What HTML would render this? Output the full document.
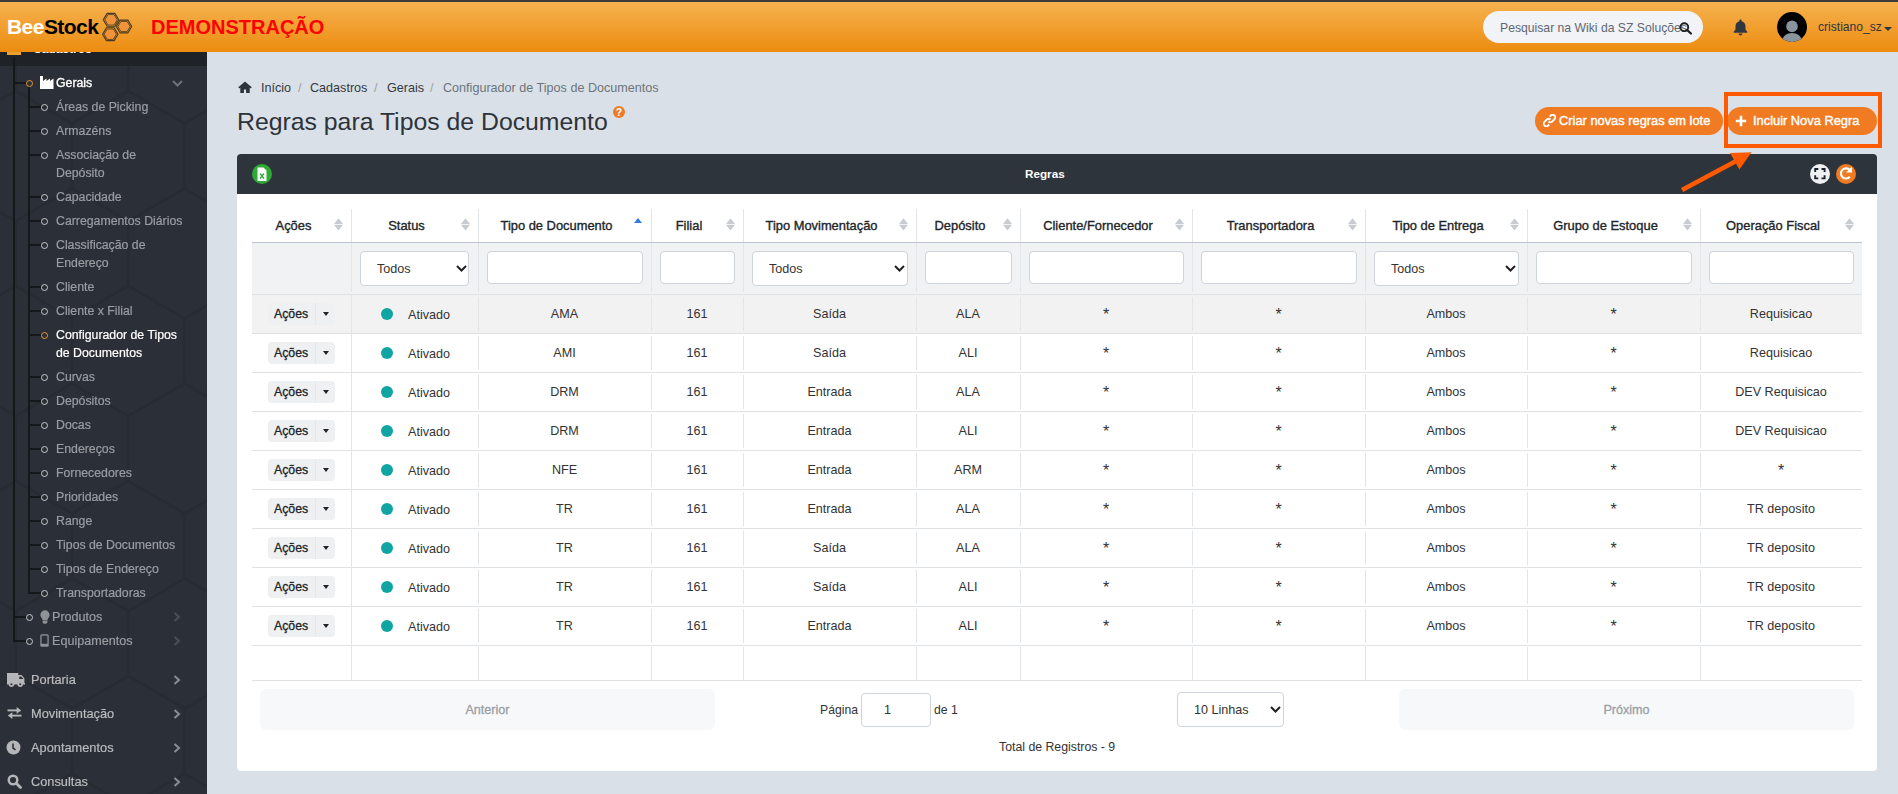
<!DOCTYPE html>
<html><head><meta charset="utf-8">
<style>
*{box-sizing:border-box;margin:0;padding:0}
html,body{width:1898px;height:794px;overflow:hidden;background:#dae0e7;font-family:"Liberation Sans",sans-serif;position:relative}
.abs{position:absolute}
.t{position:absolute;white-space:nowrap;line-height:1}
#hdr{position:absolute;left:0;top:0;width:1898px;height:52px;background:linear-gradient(#f6b24f,#ec8c10);border-top:2px solid #3b3b3b}
#side{position:absolute;left:0;top:52px;width:207px;height:742px;background:#2b2f37;overflow:hidden}
.si{position:absolute;left:56px;font-size:12.3px;line-height:18px;color:#9a9da3;white-space:nowrap;-webkit-text-stroke:0.2px currentColor}
.dot{position:absolute;width:7px;height:7px;border-radius:50%;border:1.4px solid #c8cacd}
.vl{position:absolute;background:#15181b;width:2px}
.hl{position:absolute;background:#15181b;height:2px}
.bm{position:absolute;left:31px;font-size:12.8px;color:#b9bbbe;-webkit-text-stroke:0.2px #b9bbbe;white-space:nowrap;line-height:1}
.chev{position:absolute;width:8px;height:10px}
.bc{position:absolute;top:82px;font-size:12.6px;color:#343a40;white-space:nowrap;line-height:1}
.btn{position:absolute;top:107px;height:28px;border-radius:14px;background:#f07b22;color:#fff;font-size:12.85px;-webkit-text-stroke:0.4px #fff;white-space:nowrap;line-height:28px}
.vc{position:absolute;width:1px;background:#e2e5e8}
.hr{position:absolute;height:1px;background:#e0e3e6}
.th{position:absolute;top:220px;font-size:12.9px;-webkit-text-stroke:0.35px #212529;color:#212529;white-space:nowrap;line-height:1}
.sort{position:absolute;top:218px;width:9px;height:13px}
.inp{position:absolute;top:251px;height:33px;background:#fff;border:1px solid #ced4da;border-radius:4px}
.sel{position:absolute;top:251px;height:35px;background:#fff;border:1px solid #ced4da;border-radius:4px;font-size:12.6px;color:#333;line-height:35px;padding-left:16px}
.cell{position:absolute;font-size:12.6px;color:#333;white-space:nowrap;line-height:1;text-align:center}
.ab{position:absolute;height:22px;background:#eff0f2;border-radius:4px}
.sdot{position:absolute;width:12px;height:12px;border-radius:50%;background:#10a5a2}
</style></head><body>

<div id="hdr">
<div class="t" style="left:7px;top:14px;font-weight:bold;font-size:21px;letter-spacing:-0.55px"><span style="color:#fff">Bee</span><span style="color:#000">Stock</span></div>
<svg class="abs" style="left:0;top:-2px" width="140" height="52">
<polygon points="118.70,19.80 114.85,26.27 107.15,26.27 103.30,19.80 107.15,13.33 114.85,13.33" fill="none" stroke="#4b3b22" stroke-width="1.2"/>
<polygon points="117.10,19.80 114.05,24.92 107.95,24.92 104.90,19.80 107.95,14.68 114.05,14.68" fill="none" stroke="#4b3b22" stroke-width="0.9"/>
<polygon points="116.20,19.80 113.60,24.17 108.40,24.17 105.80,19.80 108.40,15.43 113.60,15.43" fill="#f2923a"/>
<polygon points="131.70,26.50 127.85,32.97 120.15,32.97 116.30,26.50 120.15,20.03 127.85,20.03" fill="none" stroke="#4b3b22" stroke-width="1.2"/>
<polygon points="130.10,26.50 127.05,31.62 120.95,31.62 117.90,26.50 120.95,21.38 127.05,21.38" fill="none" stroke="#4b3b22" stroke-width="0.9"/>
<polygon points="129.20,26.50 126.60,30.87 121.40,30.87 118.80,26.50 121.40,22.13 126.60,22.13" fill="#f2923a"/>
<polygon points="118.00,34.20 114.15,40.67 106.45,40.67 102.60,34.20 106.45,27.73 114.15,27.73" fill="none" stroke="#4b3b22" stroke-width="1.2"/>
<polygon points="116.40,34.20 113.35,39.32 107.25,39.32 104.20,34.20 107.25,29.08 113.35,29.08" fill="none" stroke="#4b3b22" stroke-width="0.9"/>
<polygon points="115.50,34.20 112.90,38.57 107.70,38.57 105.10,34.20 107.70,29.83 112.90,29.83" fill="#f2923a"/>
</svg>
<div class="t" style="left:151px;top:15px;font-weight:bold;font-size:20px;color:#ff0000">DEMONSTRAÇÃO</div>
<div class="abs" style="left:1483px;top:9px;width:220px;height:32px;border-radius:16px;background:#f1f3f6"></div>
<div class="t" style="left:1500px;top:20px;font-size:12.2px;color:#5f6873">Pesquisar na Wiki da SZ Soluções</div>
<svg class="abs" style="left:1678px;top:18px" width="15" height="15" viewBox="0 0 15 15"><circle cx="6.3" cy="7.2" r="3.9" fill="none" stroke="#1e1e1e" stroke-width="1.9"/><line x1="9.1" y1="10" x2="12.9" y2="13.5" stroke="#1e1e1e" stroke-width="2.3" stroke-linecap="round"/></svg>
<svg class="abs" style="left:1733px;top:17px" width="15" height="17" viewBox="0 0 15 17"><path d="M7.5 0.5c0.7 0 1.1 0.5 1.1 1.1v0.6c2.4 0.5 3.9 2.6 3.9 5v3.3l1.8 2.3v1H0.7v-1l1.8-2.3V7.2c0-2.4 1.5-4.5 3.9-5V1.6c0-0.6 0.4-1.1 1.1-1.1z M5.6 14.6h3.8c0 1-0.9 1.8-1.9 1.8s-1.9-0.8-1.9-1.8z" fill="#2f3640"/></svg>
<svg class="abs" style="left:1777px;top:10px" width="30" height="30" viewBox="0 0 30 30"><defs><clipPath id="cc"><circle cx="15" cy="15" r="15"/></clipPath></defs><circle cx="15" cy="15" r="15" fill="#000"/><g clip-path="url(#cc)"><circle cx="15" cy="14.4" r="5.8" fill="#8a949e"/><ellipse cx="15" cy="28" rx="9.5" ry="7" fill="#8a949e"/></g></svg>
<div class="t" style="left:1818px;top:19px;font-size:12.1px;color:#2f3640">cristiano_sz</div>
<div class="abs" style="left:1884px;top:25px;width:0;height:0;border-left:4.5px solid transparent;border-right:4.5px solid transparent;border-top:4.5px solid #2f3640"></div>
</div>
<div id="side">
<svg class="abs" style="left:0;top:0" width="207" height="742"><defs><pattern id="hx" patternUnits="userSpaceOnUse" x="72" y="39" width="112.6" height="195"><path d="M56.3 0L112.6 32.5L112.6 97.5L56.3 130L0 97.5L0 32.5Z M56.3 130L56.3 195" fill="none" stroke="#24282e" stroke-width="3"/></pattern></defs><rect width="207" height="742" fill="url(#hx)" opacity="0.6"/></svg>
<div class="abs" style="left:0;top:0;width:207px;height:14px;background:#1f2327"></div>
<div class="abs" style="left:7px;top:0;width:14px;height:3px;background:#e8a030"></div>
<div class="t" style="left:33px;top:-9px;font-size:12px;font-weight:bold;color:#fff">Cadastros</div>
</div>
<div style="position:absolute;left:0;top:0;width:207px;height:794px;will-change:transform">
<div class="vl" style="left:13px;top:57px;height:585px"></div>
<div class="hl" style="left:13px;top:82px;width:13px"></div>
<div class="hl" style="left:13px;top:616px;width:13px"></div>
<div class="hl" style="left:13px;top:640px;width:13px"></div>
<div class="vl" style="left:28px;top:86px;height:508px"></div>
<div class="dot" style="left:26px;top:80px;border-color:#e59a2c"></div>
<svg class="abs" style="left:40px;top:76px" width="14" height="13" viewBox="0 0 14 13"><path d="M0 0h3v5l3.5-2.5v2.5l3.5-2.5v2.5l3.5-2.5v10.5H0z" fill="#fff"/></svg>
<div class="t" style="left:56px;top:77px;font-size:12.3px;color:#fff;-webkit-text-stroke:0.35px #fff">Gerais</div>
<svg class="abs" style="left:172px;top:80px" width="11" height="7" viewBox="0 0 11 7"><path d="M1 1l4.5 4.5L10 1" fill="none" stroke="#6d7177" stroke-width="2"/></svg>
<div class="hl" style="left:28px;top:106px;width:13px"></div>
<div class="dot" style="left:41px;top:104px;"></div>
<div class="si" style="top:98px;color:#9a9da3">Áreas de Picking</div>
<div class="hl" style="left:28px;top:130px;width:13px"></div>
<div class="dot" style="left:41px;top:128px;"></div>
<div class="si" style="top:122px;color:#9a9da3">Armazéns</div>
<div class="hl" style="left:28px;top:154px;width:13px"></div>
<div class="dot" style="left:41px;top:152px;"></div>
<div class="si" style="top:146px;color:#9a9da3">Associação de<br>Depósito</div>
<div class="hl" style="left:28px;top:196px;width:13px"></div>
<div class="dot" style="left:41px;top:194px;"></div>
<div class="si" style="top:188px;color:#9a9da3">Capacidade</div>
<div class="hl" style="left:28px;top:220px;width:13px"></div>
<div class="dot" style="left:41px;top:218px;"></div>
<div class="si" style="top:212px;color:#9a9da3">Carregamentos Diários</div>
<div class="hl" style="left:28px;top:244px;width:13px"></div>
<div class="dot" style="left:41px;top:242px;"></div>
<div class="si" style="top:236px;color:#9a9da3">Classificação de<br>Endereço</div>
<div class="hl" style="left:28px;top:286px;width:13px"></div>
<div class="dot" style="left:41px;top:284px;"></div>
<div class="si" style="top:278px;color:#9a9da3">Cliente</div>
<div class="hl" style="left:28px;top:310px;width:13px"></div>
<div class="dot" style="left:41px;top:308px;"></div>
<div class="si" style="top:302px;color:#9a9da3">Cliente x Filial</div>
<div class="hl" style="left:28px;top:334px;width:13px"></div>
<div class="dot" style="left:41px;top:332px;border-color:#e59a2c"></div>
<div class="si" style="top:326px;color:#fff">Configurador de Tipos<br>de Documentos</div>
<div class="hl" style="left:28px;top:376px;width:13px"></div>
<div class="dot" style="left:41px;top:374px;"></div>
<div class="si" style="top:368px;color:#9a9da3">Curvas</div>
<div class="hl" style="left:28px;top:400px;width:13px"></div>
<div class="dot" style="left:41px;top:398px;"></div>
<div class="si" style="top:392px;color:#9a9da3">Depósitos</div>
<div class="hl" style="left:28px;top:424px;width:13px"></div>
<div class="dot" style="left:41px;top:422px;"></div>
<div class="si" style="top:416px;color:#9a9da3">Docas</div>
<div class="hl" style="left:28px;top:448px;width:13px"></div>
<div class="dot" style="left:41px;top:446px;"></div>
<div class="si" style="top:440px;color:#9a9da3">Endereços</div>
<div class="hl" style="left:28px;top:472px;width:13px"></div>
<div class="dot" style="left:41px;top:470px;"></div>
<div class="si" style="top:464px;color:#9a9da3">Fornecedores</div>
<div class="hl" style="left:28px;top:496px;width:13px"></div>
<div class="dot" style="left:41px;top:494px;"></div>
<div class="si" style="top:488px;color:#9a9da3">Prioridades</div>
<div class="hl" style="left:28px;top:520px;width:13px"></div>
<div class="dot" style="left:41px;top:518px;"></div>
<div class="si" style="top:512px;color:#9a9da3">Range</div>
<div class="hl" style="left:28px;top:544px;width:13px"></div>
<div class="dot" style="left:41px;top:542px;"></div>
<div class="si" style="top:536px;color:#9a9da3">Tipos de Documentos</div>
<div class="hl" style="left:28px;top:568px;width:13px"></div>
<div class="dot" style="left:41px;top:566px;"></div>
<div class="si" style="top:560px;color:#9a9da3">Tipos de Endereço</div>
<div class="hl" style="left:28px;top:592px;width:13px"></div>
<div class="dot" style="left:41px;top:590px;"></div>
<div class="si" style="top:584px;color:#9a9da3">Transportadoras</div>
<div class="dot" style="left:26px;top:614px"></div>
<div class="dot" style="left:26px;top:638px"></div>
<svg class="abs" style="left:40px;top:610px" width="10" height="14" viewBox="0 0 10 14"><path d="M5 0.3a4.6 4.6 0 0 1 4.6 4.6c0 1.8-1.3 2.9-2 4.2v1.3H2.4V9.1C1.7 7.8 0.4 6.7 0.4 4.9A4.6 4.6 0 0 1 5 0.3z M2.6 11h4.8v1.2c0 0.8-0.9 1.5-2.4 1.5s-2.4-0.7-2.4-1.5z" fill="#8f9296"/></svg>
<div class="t" style="left:52px;top:611px;font-size:12.6px;color:#9a9da3;-webkit-text-stroke:0.2px #9a9da3">Produtos</div>
<svg class="abs" style="left:40px;top:634px" width="9" height="13" viewBox="0 0 9 13"><rect x="0.3" y="0.3" width="8.4" height="12.4" rx="1.5" fill="#8f9296"/><rect x="1.6" y="1.6" width="5.8" height="8.2" fill="#2b2f37"/></svg>
<div class="t" style="left:52px;top:635px;font-size:12.6px;color:#9a9da3;-webkit-text-stroke:0.2px #9a9da3">Equipamentos</div>
<svg class="chev" style="left:173px;top:612px" viewBox="0 0 8 10"><path d="M1.5 1l4.5 4L1.5 9" fill="none" stroke="#4b4f55" stroke-width="2"/></svg>
<svg class="chev" style="left:173px;top:636px" viewBox="0 0 8 10"><path d="M1.5 1l4.5 4L1.5 9" fill="none" stroke="#4b4f55" stroke-width="2"/></svg>
<div class="bm" style="top:674px">Portaria</div>
<svg class="chev" style="left:173px;top:675px" viewBox="0 0 8 10"><path d="M1.5 1l4.5 4L1.5 9" fill="none" stroke="#8a8d92" stroke-width="2"/></svg>
<div class="bm" style="top:708px">Movimentação</div>
<svg class="chev" style="left:173px;top:709px" viewBox="0 0 8 10"><path d="M1.5 1l4.5 4L1.5 9" fill="none" stroke="#8a8d92" stroke-width="2"/></svg>
<div class="bm" style="top:742px">Apontamentos</div>
<svg class="chev" style="left:173px;top:743px" viewBox="0 0 8 10"><path d="M1.5 1l4.5 4L1.5 9" fill="none" stroke="#8a8d92" stroke-width="2"/></svg>
<div class="bm" style="top:776px">Consultas</div>
<svg class="chev" style="left:173px;top:777px" viewBox="0 0 8 10"><path d="M1.5 1l4.5 4L1.5 9" fill="none" stroke="#8a8d92" stroke-width="2"/></svg>
<svg class="abs" style="left:7px;top:672px" width="19" height="16" viewBox="0 0 19 16"><path d="M0 1h11.3v2.1h3.3l2.8 3.2v4.7h0.6v1.6H0z" fill="#b4b6b9"/><path d="M12.3 4.4h1.9l2.3 2.7h-4.2z" fill="#2b2f37"/><circle cx="4.4" cy="12.3" r="2.7" fill="#b4b6b9"/><circle cx="13.2" cy="12.3" r="2.7" fill="#b4b6b9"/><circle cx="4.4" cy="12.3" r="1" fill="#2b2f37"/><circle cx="13.2" cy="12.3" r="1" fill="#2b2f37"/></svg>
<svg class="abs" style="left:7px;top:706px" width="15" height="13" viewBox="0 0 15 13"><path d="M0.5 4.4h10" stroke="#b4b6b9" stroke-width="1.9"/><path d="M9.6 1.1l4.6 3.3-4.6 3.3z" fill="#b4b6b9"/><path d="M14.5 9.6h-10" stroke="#b4b6b9" stroke-width="1.9"/><path d="M5.4 6.3L0.8 9.6l4.6 3.3z" fill="#b4b6b9"/></svg>
<svg class="abs" style="left:6px;top:740px" width="15" height="15" viewBox="0 0 15 15"><circle cx="7.5" cy="7.5" r="7" fill="#b4b6b9"/><path d="M7 3.5v4.5l2.5 1.8" fill="none" stroke="#2b2f37" stroke-width="1.6"/></svg>
<svg class="abs" style="left:7px;top:774px" width="15" height="15" viewBox="0 0 15 15"><circle cx="6" cy="6" r="4.3" fill="none" stroke="#b4b6b9" stroke-width="2.4"/><line x1="9.3" y1="9.3" x2="13.5" y2="13.5" stroke="#b4b6b9" stroke-width="2.8" stroke-linecap="round"/></svg>
</div>
<svg class="abs" style="left:238px;top:81px" width="14" height="12" viewBox="0 0 14 12"><path d="M7 0.5L0.3 6.3l1 1.1L2.3 6.6V12h3.6V8.4h2.2V12h3.6V6.6l1 0.8 1-1.1z" fill="#2d333a"/></svg>
<div class="bc" style="left:261px">Início</div>
<div class="bc" style="left:298px;color:#9aa1a8">/</div>
<div class="bc" style="left:310px">Cadastros</div>
<div class="bc" style="left:374px;color:#9aa1a8">/</div>
<div class="bc" style="left:387px">Gerais</div>
<div class="bc" style="left:430px;color:#9aa1a8">/</div>
<div class="bc" style="left:443px;color:#6c757d">Configurador de Tipos de Documentos</div>
<div class="t" style="left:237px;top:110px;font-size:24.8px;color:#2d333a">Regras para Tipos de Documento</div>
<div class="abs" style="left:613px;top:106px;width:12px;height:12px;border-radius:50%;background:#f07b22;color:#fff;font-size:10.5px;font-weight:bold;line-height:12.5px;text-align:center">?</div>
<div class="btn" style="left:1535px;width:188px;padding-left:24px">Criar novas regras em lote</div>
<svg class="abs" style="left:1543px;top:114px" width="13" height="13" viewBox="0 0 13 13"><path d="M5.5 7.5a2.6 2.6 0 0 0 3.7 0l2.3-2.3a2.6 2.6 0 0 0-3.7-3.7L6.7 2.6 M7.5 5.5a2.6 2.6 0 0 0-3.7 0L1.5 7.8a2.6 2.6 0 0 0 3.7 3.7l1.1-1.1" fill="none" stroke="#fff" stroke-width="1.8"/></svg>
<div class="btn" style="left:1727px;width:150px;padding-left:26px">Incluir Nova Regra</div>
<svg class="abs" style="left:1735px;top:115px" width="12" height="12" viewBox="0 0 12 12"><path d="M6 0.8v10.4M0.8 6h10.4" stroke="#fff" stroke-width="2.6"/></svg>
<div class="abs" style="left:237px;top:154px;width:1640px;height:617px;background:#fff;border-radius:4px"></div>
<div class="abs" style="left:237px;top:154px;width:1640px;height:40px;background:#2e343c;border-radius:4px 4px 0 0"></div>
<div class="t" style="left:1025px;top:168px;font-weight:bold;font-size:11.7px;color:#fff">Regras</div>
<svg class="abs" style="left:252px;top:164px" width="20" height="20" viewBox="0 0 20 20"><circle cx="10" cy="10" r="10" fill="#2eaa35"/><path d="M5.5 3.5h6l3 3v10.5h-9z" fill="#fff"/><path d="M8 9.5l4 5M12 9.5l-4 5" stroke="#2eaa35" stroke-width="1.3"/></svg>
<svg class="abs" style="left:1810px;top:164px" width="20" height="20" viewBox="0 0 20 20"><circle cx="10" cy="10" r="10" fill="#eef0f2"/><path d="M5.2 8.1V5H8.3M11.5 5H14.6V8.1M14.6 11.3V14.4H11.5M8.3 14.4H5.2V11.3" fill="none" stroke="#1a2030" stroke-width="1.9"/></svg>
<svg class="abs" style="left:1836px;top:164px" width="20" height="20" viewBox="0 0 20 20"><circle cx="10" cy="10" r="10" fill="#f07b22"/><path d="M13.9 6.1A5.1 5.1 0 1 0 13.9 12.8" fill="none" stroke="#fff" stroke-width="2.1"/><path d="M10 8.4H16V2.6z" fill="#fff"/></svg>
<div class="abs" style="left:252px;top:243px;width:1610px;height:51px;background:#f1f2f4"></div>
<div class="abs" style="left:252px;top:294px;width:1610px;height:39px;background:#f2f2f2"></div>
<div class="abs" style="left:252px;top:242px;width:1610px;height:1px;background:#bcc5cf"></div>
<div class="hr" style="left:252px;top:294px;width:1610px"></div>
<div class="hr" style="left:252px;top:333px;width:1610px"></div>
<div class="hr" style="left:252px;top:372px;width:1610px"></div>
<div class="hr" style="left:252px;top:411px;width:1610px"></div>
<div class="hr" style="left:252px;top:450px;width:1610px"></div>
<div class="hr" style="left:252px;top:489px;width:1610px"></div>
<div class="hr" style="left:252px;top:528px;width:1610px"></div>
<div class="hr" style="left:252px;top:567px;width:1610px"></div>
<div class="hr" style="left:252px;top:606px;width:1610px"></div>
<div class="hr" style="left:252px;top:645px;width:1610px"></div>
<div class="hr" style="left:252px;top:680px;width:1610px"></div>
<div class="vc" style="left:351px;top:209px;height:33px"></div>
<div class="vc" style="left:351px;top:243px;height:49px"></div>
<div class="vc" style="left:351px;top:294px;height:386px"></div>
<div class="vc" style="left:478px;top:209px;height:33px"></div>
<div class="vc" style="left:478px;top:243px;height:49px"></div>
<div class="vc" style="left:478px;top:297px;height:34px"></div>
<div class="vc" style="left:478px;top:336px;height:34px"></div>
<div class="vc" style="left:478px;top:375px;height:34px"></div>
<div class="vc" style="left:478px;top:414px;height:34px"></div>
<div class="vc" style="left:478px;top:453px;height:34px"></div>
<div class="vc" style="left:478px;top:492px;height:34px"></div>
<div class="vc" style="left:478px;top:531px;height:34px"></div>
<div class="vc" style="left:478px;top:570px;height:34px"></div>
<div class="vc" style="left:478px;top:609px;height:34px"></div>
<div class="vc" style="left:478px;top:647px;height:33px"></div>
<div class="vc" style="left:651px;top:209px;height:33px"></div>
<div class="vc" style="left:651px;top:243px;height:49px"></div>
<div class="vc" style="left:651px;top:297px;height:34px"></div>
<div class="vc" style="left:651px;top:336px;height:34px"></div>
<div class="vc" style="left:651px;top:375px;height:34px"></div>
<div class="vc" style="left:651px;top:414px;height:34px"></div>
<div class="vc" style="left:651px;top:453px;height:34px"></div>
<div class="vc" style="left:651px;top:492px;height:34px"></div>
<div class="vc" style="left:651px;top:531px;height:34px"></div>
<div class="vc" style="left:651px;top:570px;height:34px"></div>
<div class="vc" style="left:651px;top:609px;height:34px"></div>
<div class="vc" style="left:651px;top:647px;height:33px"></div>
<div class="vc" style="left:743px;top:209px;height:33px"></div>
<div class="vc" style="left:743px;top:243px;height:49px"></div>
<div class="vc" style="left:743px;top:297px;height:34px"></div>
<div class="vc" style="left:743px;top:336px;height:34px"></div>
<div class="vc" style="left:743px;top:375px;height:34px"></div>
<div class="vc" style="left:743px;top:414px;height:34px"></div>
<div class="vc" style="left:743px;top:453px;height:34px"></div>
<div class="vc" style="left:743px;top:492px;height:34px"></div>
<div class="vc" style="left:743px;top:531px;height:34px"></div>
<div class="vc" style="left:743px;top:570px;height:34px"></div>
<div class="vc" style="left:743px;top:609px;height:34px"></div>
<div class="vc" style="left:743px;top:647px;height:33px"></div>
<div class="vc" style="left:916px;top:209px;height:33px"></div>
<div class="vc" style="left:916px;top:243px;height:49px"></div>
<div class="vc" style="left:916px;top:297px;height:34px"></div>
<div class="vc" style="left:916px;top:336px;height:34px"></div>
<div class="vc" style="left:916px;top:375px;height:34px"></div>
<div class="vc" style="left:916px;top:414px;height:34px"></div>
<div class="vc" style="left:916px;top:453px;height:34px"></div>
<div class="vc" style="left:916px;top:492px;height:34px"></div>
<div class="vc" style="left:916px;top:531px;height:34px"></div>
<div class="vc" style="left:916px;top:570px;height:34px"></div>
<div class="vc" style="left:916px;top:609px;height:34px"></div>
<div class="vc" style="left:916px;top:647px;height:33px"></div>
<div class="vc" style="left:1020px;top:209px;height:33px"></div>
<div class="vc" style="left:1020px;top:243px;height:49px"></div>
<div class="vc" style="left:1020px;top:297px;height:34px"></div>
<div class="vc" style="left:1020px;top:336px;height:34px"></div>
<div class="vc" style="left:1020px;top:375px;height:34px"></div>
<div class="vc" style="left:1020px;top:414px;height:34px"></div>
<div class="vc" style="left:1020px;top:453px;height:34px"></div>
<div class="vc" style="left:1020px;top:492px;height:34px"></div>
<div class="vc" style="left:1020px;top:531px;height:34px"></div>
<div class="vc" style="left:1020px;top:570px;height:34px"></div>
<div class="vc" style="left:1020px;top:609px;height:34px"></div>
<div class="vc" style="left:1020px;top:647px;height:33px"></div>
<div class="vc" style="left:1192px;top:209px;height:33px"></div>
<div class="vc" style="left:1192px;top:243px;height:49px"></div>
<div class="vc" style="left:1192px;top:297px;height:34px"></div>
<div class="vc" style="left:1192px;top:336px;height:34px"></div>
<div class="vc" style="left:1192px;top:375px;height:34px"></div>
<div class="vc" style="left:1192px;top:414px;height:34px"></div>
<div class="vc" style="left:1192px;top:453px;height:34px"></div>
<div class="vc" style="left:1192px;top:492px;height:34px"></div>
<div class="vc" style="left:1192px;top:531px;height:34px"></div>
<div class="vc" style="left:1192px;top:570px;height:34px"></div>
<div class="vc" style="left:1192px;top:609px;height:34px"></div>
<div class="vc" style="left:1192px;top:647px;height:33px"></div>
<div class="vc" style="left:1365px;top:209px;height:33px"></div>
<div class="vc" style="left:1365px;top:243px;height:49px"></div>
<div class="vc" style="left:1365px;top:297px;height:34px"></div>
<div class="vc" style="left:1365px;top:336px;height:34px"></div>
<div class="vc" style="left:1365px;top:375px;height:34px"></div>
<div class="vc" style="left:1365px;top:414px;height:34px"></div>
<div class="vc" style="left:1365px;top:453px;height:34px"></div>
<div class="vc" style="left:1365px;top:492px;height:34px"></div>
<div class="vc" style="left:1365px;top:531px;height:34px"></div>
<div class="vc" style="left:1365px;top:570px;height:34px"></div>
<div class="vc" style="left:1365px;top:609px;height:34px"></div>
<div class="vc" style="left:1365px;top:647px;height:33px"></div>
<div class="vc" style="left:1527px;top:209px;height:33px"></div>
<div class="vc" style="left:1527px;top:243px;height:49px"></div>
<div class="vc" style="left:1527px;top:297px;height:34px"></div>
<div class="vc" style="left:1527px;top:336px;height:34px"></div>
<div class="vc" style="left:1527px;top:375px;height:34px"></div>
<div class="vc" style="left:1527px;top:414px;height:34px"></div>
<div class="vc" style="left:1527px;top:453px;height:34px"></div>
<div class="vc" style="left:1527px;top:492px;height:34px"></div>
<div class="vc" style="left:1527px;top:531px;height:34px"></div>
<div class="vc" style="left:1527px;top:570px;height:34px"></div>
<div class="vc" style="left:1527px;top:609px;height:34px"></div>
<div class="vc" style="left:1527px;top:647px;height:33px"></div>
<div class="vc" style="left:1700px;top:209px;height:33px"></div>
<div class="vc" style="left:1700px;top:243px;height:49px"></div>
<div class="vc" style="left:1700px;top:297px;height:34px"></div>
<div class="vc" style="left:1700px;top:336px;height:34px"></div>
<div class="vc" style="left:1700px;top:375px;height:34px"></div>
<div class="vc" style="left:1700px;top:414px;height:34px"></div>
<div class="vc" style="left:1700px;top:453px;height:34px"></div>
<div class="vc" style="left:1700px;top:492px;height:34px"></div>
<div class="vc" style="left:1700px;top:531px;height:34px"></div>
<div class="vc" style="left:1700px;top:570px;height:34px"></div>
<div class="vc" style="left:1700px;top:609px;height:34px"></div>
<div class="vc" style="left:1700px;top:647px;height:33px"></div>
<div class="th" style="left:252px;width:83px;text-align:center">Ações</div>
<svg class="sort" style="left:334px" viewBox="0 0 9 13"><path d="M4.5 0.3L9 5.9H0z M4.5 12.4L9 6.8H0z" fill="#c8cbcf"/></svg>
<div class="th" style="left:351px;width:111px;text-align:center">Status</div>
<svg class="sort" style="left:461px" viewBox="0 0 9 13"><path d="M4.5 0.3L9 5.9H0z M4.5 12.4L9 6.8H0z" fill="#c8cbcf"/></svg>
<div class="th" style="left:478px;width:157px;text-align:center">Tipo de Documento</div>
<div class="abs" style="left:634px;top:218px;width:0;height:0;border-left:4.5px solid transparent;border-right:4.5px solid transparent;border-bottom:5px solid #2f7de1"></div>
<div class="th" style="left:651px;width:76px;text-align:center">Filial</div>
<svg class="sort" style="left:726px" viewBox="0 0 9 13"><path d="M4.5 0.3L9 5.9H0z M4.5 12.4L9 6.8H0z" fill="#c8cbcf"/></svg>
<div class="th" style="left:743px;width:157px;text-align:center">Tipo Movimentação</div>
<svg class="sort" style="left:899px" viewBox="0 0 9 13"><path d="M4.5 0.3L9 5.9H0z M4.5 12.4L9 6.8H0z" fill="#c8cbcf"/></svg>
<div class="th" style="left:916px;width:88px;text-align:center">Depósito</div>
<svg class="sort" style="left:1003px" viewBox="0 0 9 13"><path d="M4.5 0.3L9 5.9H0z M4.5 12.4L9 6.8H0z" fill="#c8cbcf"/></svg>
<div class="th" style="left:1020px;width:156px;text-align:center">Cliente/Fornecedor</div>
<svg class="sort" style="left:1175px" viewBox="0 0 9 13"><path d="M4.5 0.3L9 5.9H0z M4.5 12.4L9 6.8H0z" fill="#c8cbcf"/></svg>
<div class="th" style="left:1192px;width:157px;text-align:center">Transportadora</div>
<svg class="sort" style="left:1348px" viewBox="0 0 9 13"><path d="M4.5 0.3L9 5.9H0z M4.5 12.4L9 6.8H0z" fill="#c8cbcf"/></svg>
<div class="th" style="left:1365px;width:146px;text-align:center">Tipo de Entrega</div>
<svg class="sort" style="left:1510px" viewBox="0 0 9 13"><path d="M4.5 0.3L9 5.9H0z M4.5 12.4L9 6.8H0z" fill="#c8cbcf"/></svg>
<div class="th" style="left:1527px;width:157px;text-align:center">Grupo de Estoque</div>
<svg class="sort" style="left:1683px" viewBox="0 0 9 13"><path d="M4.5 0.3L9 5.9H0z M4.5 12.4L9 6.8H0z" fill="#c8cbcf"/></svg>
<div class="th" style="left:1700px;width:146px;text-align:center">Operação Fiscal</div>
<svg class="sort" style="left:1845px" viewBox="0 0 9 13"><path d="M4.5 0.3L9 5.9H0z M4.5 12.4L9 6.8H0z" fill="#c8cbcf"/></svg>
<div class="sel" style="left:360px;width:109px">Todos</div>
<div class="inp" style="left:487px;width:156px"></div>
<div class="inp" style="left:660px;width:75px"></div>
<div class="sel" style="left:752px;width:156px">Todos</div>
<div class="inp" style="left:925px;width:87px"></div>
<div class="inp" style="left:1029px;width:155px"></div>
<div class="inp" style="left:1201px;width:156px"></div>
<div class="sel" style="left:1374px;width:145px">Todos</div>
<div class="inp" style="left:1536px;width:156px"></div>
<div class="inp" style="left:1709px;width:145px"></div>
<svg class="abs" style="left:456px;top:265px" width="11" height="7" viewBox="0 0 11 7"><path d="M1 1l4.5 4.5L10 1" fill="none" stroke="#222" stroke-width="2"/></svg>
<svg class="abs" style="left:894px;top:265px" width="11" height="7" viewBox="0 0 11 7"><path d="M1 1l4.5 4.5L10 1" fill="none" stroke="#222" stroke-width="2"/></svg>
<svg class="abs" style="left:1505px;top:265px" width="11" height="7" viewBox="0 0 11 7"><path d="M1 1l4.5 4.5L10 1" fill="none" stroke="#222" stroke-width="2"/></svg>
<div class="ab" style="left:268px;top:303px;width:47px;border-radius:4px 0 0 4px"></div>
<div class="ab" style="left:315px;top:303px;width:20px;border-radius:0 4px 4px 0;border-left:1px solid #e6e7ea"></div>
<div class="t" style="left:274px;top:308px;font-size:12.3px;-webkit-text-stroke:0.3px #212529;color:#212529">Ações</div>
<div class="abs" style="left:323px;top:312px;width:0;height:0;border-left:3.5px solid transparent;border-right:3.5px solid transparent;border-top:4px solid #212529"></div>
<div class="sdot" style="left:381px;top:308px"></div>
<div class="t" style="left:408px;top:309px;font-size:12.6px;color:#333">Ativado</div>
<div class="cell" style="left:478px;width:173px;top:308px">AMA</div>
<div class="cell" style="left:651px;width:92px;top:308px">161</div>
<div class="cell" style="left:743px;width:173px;top:308px">Saída</div>
<div class="cell" style="left:916px;width:104px;top:308px">ALA</div>
<div class="cell" style="left:1020px;width:172px;top:307px;font-size:16px">*</div>
<div class="cell" style="left:1192px;width:173px;top:307px;font-size:16px">*</div>
<div class="cell" style="left:1365px;width:162px;top:308px">Ambos</div>
<div class="cell" style="left:1527px;width:173px;top:307px;font-size:16px">*</div>
<div class="cell" style="left:1700px;width:162px;top:308px">Requisicao</div>
<div class="ab" style="left:268px;top:342px;width:47px;border-radius:4px 0 0 4px"></div>
<div class="ab" style="left:315px;top:342px;width:20px;border-radius:0 4px 4px 0;border-left:1px solid #e6e7ea"></div>
<div class="t" style="left:274px;top:347px;font-size:12.3px;-webkit-text-stroke:0.3px #212529;color:#212529">Ações</div>
<div class="abs" style="left:323px;top:351px;width:0;height:0;border-left:3.5px solid transparent;border-right:3.5px solid transparent;border-top:4px solid #212529"></div>
<div class="sdot" style="left:381px;top:347px"></div>
<div class="t" style="left:408px;top:348px;font-size:12.6px;color:#333">Ativado</div>
<div class="cell" style="left:478px;width:173px;top:347px">AMI</div>
<div class="cell" style="left:651px;width:92px;top:347px">161</div>
<div class="cell" style="left:743px;width:173px;top:347px">Saída</div>
<div class="cell" style="left:916px;width:104px;top:347px">ALI</div>
<div class="cell" style="left:1020px;width:172px;top:346px;font-size:16px">*</div>
<div class="cell" style="left:1192px;width:173px;top:346px;font-size:16px">*</div>
<div class="cell" style="left:1365px;width:162px;top:347px">Ambos</div>
<div class="cell" style="left:1527px;width:173px;top:346px;font-size:16px">*</div>
<div class="cell" style="left:1700px;width:162px;top:347px">Requisicao</div>
<div class="ab" style="left:268px;top:381px;width:47px;border-radius:4px 0 0 4px"></div>
<div class="ab" style="left:315px;top:381px;width:20px;border-radius:0 4px 4px 0;border-left:1px solid #e6e7ea"></div>
<div class="t" style="left:274px;top:386px;font-size:12.3px;-webkit-text-stroke:0.3px #212529;color:#212529">Ações</div>
<div class="abs" style="left:323px;top:390px;width:0;height:0;border-left:3.5px solid transparent;border-right:3.5px solid transparent;border-top:4px solid #212529"></div>
<div class="sdot" style="left:381px;top:386px"></div>
<div class="t" style="left:408px;top:387px;font-size:12.6px;color:#333">Ativado</div>
<div class="cell" style="left:478px;width:173px;top:386px">DRM</div>
<div class="cell" style="left:651px;width:92px;top:386px">161</div>
<div class="cell" style="left:743px;width:173px;top:386px">Entrada</div>
<div class="cell" style="left:916px;width:104px;top:386px">ALA</div>
<div class="cell" style="left:1020px;width:172px;top:385px;font-size:16px">*</div>
<div class="cell" style="left:1192px;width:173px;top:385px;font-size:16px">*</div>
<div class="cell" style="left:1365px;width:162px;top:386px">Ambos</div>
<div class="cell" style="left:1527px;width:173px;top:385px;font-size:16px">*</div>
<div class="cell" style="left:1700px;width:162px;top:386px">DEV Requisicao</div>
<div class="ab" style="left:268px;top:420px;width:47px;border-radius:4px 0 0 4px"></div>
<div class="ab" style="left:315px;top:420px;width:20px;border-radius:0 4px 4px 0;border-left:1px solid #e6e7ea"></div>
<div class="t" style="left:274px;top:425px;font-size:12.3px;-webkit-text-stroke:0.3px #212529;color:#212529">Ações</div>
<div class="abs" style="left:323px;top:429px;width:0;height:0;border-left:3.5px solid transparent;border-right:3.5px solid transparent;border-top:4px solid #212529"></div>
<div class="sdot" style="left:381px;top:425px"></div>
<div class="t" style="left:408px;top:426px;font-size:12.6px;color:#333">Ativado</div>
<div class="cell" style="left:478px;width:173px;top:425px">DRM</div>
<div class="cell" style="left:651px;width:92px;top:425px">161</div>
<div class="cell" style="left:743px;width:173px;top:425px">Entrada</div>
<div class="cell" style="left:916px;width:104px;top:425px">ALI</div>
<div class="cell" style="left:1020px;width:172px;top:424px;font-size:16px">*</div>
<div class="cell" style="left:1192px;width:173px;top:424px;font-size:16px">*</div>
<div class="cell" style="left:1365px;width:162px;top:425px">Ambos</div>
<div class="cell" style="left:1527px;width:173px;top:424px;font-size:16px">*</div>
<div class="cell" style="left:1700px;width:162px;top:425px">DEV Requisicao</div>
<div class="ab" style="left:268px;top:459px;width:47px;border-radius:4px 0 0 4px"></div>
<div class="ab" style="left:315px;top:459px;width:20px;border-radius:0 4px 4px 0;border-left:1px solid #e6e7ea"></div>
<div class="t" style="left:274px;top:464px;font-size:12.3px;-webkit-text-stroke:0.3px #212529;color:#212529">Ações</div>
<div class="abs" style="left:323px;top:468px;width:0;height:0;border-left:3.5px solid transparent;border-right:3.5px solid transparent;border-top:4px solid #212529"></div>
<div class="sdot" style="left:381px;top:464px"></div>
<div class="t" style="left:408px;top:465px;font-size:12.6px;color:#333">Ativado</div>
<div class="cell" style="left:478px;width:173px;top:464px">NFE</div>
<div class="cell" style="left:651px;width:92px;top:464px">161</div>
<div class="cell" style="left:743px;width:173px;top:464px">Entrada</div>
<div class="cell" style="left:916px;width:104px;top:464px">ARM</div>
<div class="cell" style="left:1020px;width:172px;top:463px;font-size:16px">*</div>
<div class="cell" style="left:1192px;width:173px;top:463px;font-size:16px">*</div>
<div class="cell" style="left:1365px;width:162px;top:464px">Ambos</div>
<div class="cell" style="left:1527px;width:173px;top:463px;font-size:16px">*</div>
<div class="cell" style="left:1700px;width:162px;top:463px;font-size:16px">*</div>
<div class="ab" style="left:268px;top:498px;width:47px;border-radius:4px 0 0 4px"></div>
<div class="ab" style="left:315px;top:498px;width:20px;border-radius:0 4px 4px 0;border-left:1px solid #e6e7ea"></div>
<div class="t" style="left:274px;top:503px;font-size:12.3px;-webkit-text-stroke:0.3px #212529;color:#212529">Ações</div>
<div class="abs" style="left:323px;top:507px;width:0;height:0;border-left:3.5px solid transparent;border-right:3.5px solid transparent;border-top:4px solid #212529"></div>
<div class="sdot" style="left:381px;top:503px"></div>
<div class="t" style="left:408px;top:504px;font-size:12.6px;color:#333">Ativado</div>
<div class="cell" style="left:478px;width:173px;top:503px">TR</div>
<div class="cell" style="left:651px;width:92px;top:503px">161</div>
<div class="cell" style="left:743px;width:173px;top:503px">Entrada</div>
<div class="cell" style="left:916px;width:104px;top:503px">ALA</div>
<div class="cell" style="left:1020px;width:172px;top:502px;font-size:16px">*</div>
<div class="cell" style="left:1192px;width:173px;top:502px;font-size:16px">*</div>
<div class="cell" style="left:1365px;width:162px;top:503px">Ambos</div>
<div class="cell" style="left:1527px;width:173px;top:502px;font-size:16px">*</div>
<div class="cell" style="left:1700px;width:162px;top:503px">TR deposito</div>
<div class="ab" style="left:268px;top:537px;width:47px;border-radius:4px 0 0 4px"></div>
<div class="ab" style="left:315px;top:537px;width:20px;border-radius:0 4px 4px 0;border-left:1px solid #e6e7ea"></div>
<div class="t" style="left:274px;top:542px;font-size:12.3px;-webkit-text-stroke:0.3px #212529;color:#212529">Ações</div>
<div class="abs" style="left:323px;top:546px;width:0;height:0;border-left:3.5px solid transparent;border-right:3.5px solid transparent;border-top:4px solid #212529"></div>
<div class="sdot" style="left:381px;top:542px"></div>
<div class="t" style="left:408px;top:543px;font-size:12.6px;color:#333">Ativado</div>
<div class="cell" style="left:478px;width:173px;top:542px">TR</div>
<div class="cell" style="left:651px;width:92px;top:542px">161</div>
<div class="cell" style="left:743px;width:173px;top:542px">Saída</div>
<div class="cell" style="left:916px;width:104px;top:542px">ALA</div>
<div class="cell" style="left:1020px;width:172px;top:541px;font-size:16px">*</div>
<div class="cell" style="left:1192px;width:173px;top:541px;font-size:16px">*</div>
<div class="cell" style="left:1365px;width:162px;top:542px">Ambos</div>
<div class="cell" style="left:1527px;width:173px;top:541px;font-size:16px">*</div>
<div class="cell" style="left:1700px;width:162px;top:542px">TR deposito</div>
<div class="ab" style="left:268px;top:576px;width:47px;border-radius:4px 0 0 4px"></div>
<div class="ab" style="left:315px;top:576px;width:20px;border-radius:0 4px 4px 0;border-left:1px solid #e6e7ea"></div>
<div class="t" style="left:274px;top:581px;font-size:12.3px;-webkit-text-stroke:0.3px #212529;color:#212529">Ações</div>
<div class="abs" style="left:323px;top:585px;width:0;height:0;border-left:3.5px solid transparent;border-right:3.5px solid transparent;border-top:4px solid #212529"></div>
<div class="sdot" style="left:381px;top:581px"></div>
<div class="t" style="left:408px;top:582px;font-size:12.6px;color:#333">Ativado</div>
<div class="cell" style="left:478px;width:173px;top:581px">TR</div>
<div class="cell" style="left:651px;width:92px;top:581px">161</div>
<div class="cell" style="left:743px;width:173px;top:581px">Saída</div>
<div class="cell" style="left:916px;width:104px;top:581px">ALI</div>
<div class="cell" style="left:1020px;width:172px;top:580px;font-size:16px">*</div>
<div class="cell" style="left:1192px;width:173px;top:580px;font-size:16px">*</div>
<div class="cell" style="left:1365px;width:162px;top:581px">Ambos</div>
<div class="cell" style="left:1527px;width:173px;top:580px;font-size:16px">*</div>
<div class="cell" style="left:1700px;width:162px;top:581px">TR deposito</div>
<div class="ab" style="left:268px;top:615px;width:47px;border-radius:4px 0 0 4px"></div>
<div class="ab" style="left:315px;top:615px;width:20px;border-radius:0 4px 4px 0;border-left:1px solid #e6e7ea"></div>
<div class="t" style="left:274px;top:620px;font-size:12.3px;-webkit-text-stroke:0.3px #212529;color:#212529">Ações</div>
<div class="abs" style="left:323px;top:624px;width:0;height:0;border-left:3.5px solid transparent;border-right:3.5px solid transparent;border-top:4px solid #212529"></div>
<div class="sdot" style="left:381px;top:620px"></div>
<div class="t" style="left:408px;top:621px;font-size:12.6px;color:#333">Ativado</div>
<div class="cell" style="left:478px;width:173px;top:620px">TR</div>
<div class="cell" style="left:651px;width:92px;top:620px">161</div>
<div class="cell" style="left:743px;width:173px;top:620px">Entrada</div>
<div class="cell" style="left:916px;width:104px;top:620px">ALI</div>
<div class="cell" style="left:1020px;width:172px;top:619px;font-size:16px">*</div>
<div class="cell" style="left:1192px;width:173px;top:619px;font-size:16px">*</div>
<div class="cell" style="left:1365px;width:162px;top:620px">Ambos</div>
<div class="cell" style="left:1527px;width:173px;top:619px;font-size:16px">*</div>
<div class="cell" style="left:1700px;width:162px;top:620px">TR deposito</div>
<div class="abs" style="left:260px;top:689px;width:455px;height:41px;background:#f7f8f9;border-radius:6px"></div>
<div class="t" style="left:260px;width:455px;text-align:center;top:704px;font-size:12.6px;color:#9a9fa5;-webkit-text-stroke:0.3px #9a9fa5">Anterior</div>
<div class="t" style="left:820px;top:704px;font-size:12.2px;color:#333">Página</div>
<div class="abs" style="left:861px;top:693px;width:70px;height:34px;background:#fff;border:1px solid #ced4da;border-radius:4px"></div>
<div class="t" style="left:884px;top:704px;font-size:12.6px;color:#333">1</div>
<div class="t" style="left:934px;top:704px;font-size:12.2px;color:#333">de 1</div>
<div class="sel" style="left:1177px;top:692px;width:107px;height:35px;padding-left:16px">10 Linhas</div>
<svg class="abs" style="left:1270px;top:706px" width="11" height="7" viewBox="0 0 11 7"><path d="M1 1l4.5 4.5L10 1" fill="none" stroke="#222" stroke-width="2"/></svg>
<div class="abs" style="left:1399px;top:689px;width:455px;height:41px;background:#f7f8f9;border-radius:6px"></div>
<div class="t" style="left:1399px;width:455px;text-align:center;top:704px;font-size:12.6px;color:#9a9fa5;-webkit-text-stroke:0.3px #9a9fa5">Próximo</div>
<div class="t" style="left:999px;top:741px;font-size:12.3px;color:#333">Total de Registros - 9</div>
<div class="abs" style="left:1724px;top:92px;width:158px;height:56px;border:4px solid #ff5a00"></div>
<svg class="abs" style="left:1670px;top:145px" width="90" height="50" viewBox="1670 145 90 50"><line x1="1682" y1="190" x2="1738" y2="160" stroke="#ff5a00" stroke-width="4.5"/><polygon points="1751.6,152.2 1730,152.9 1739.4,169.6" fill="#ff5a00"/></svg>
</body></html>
